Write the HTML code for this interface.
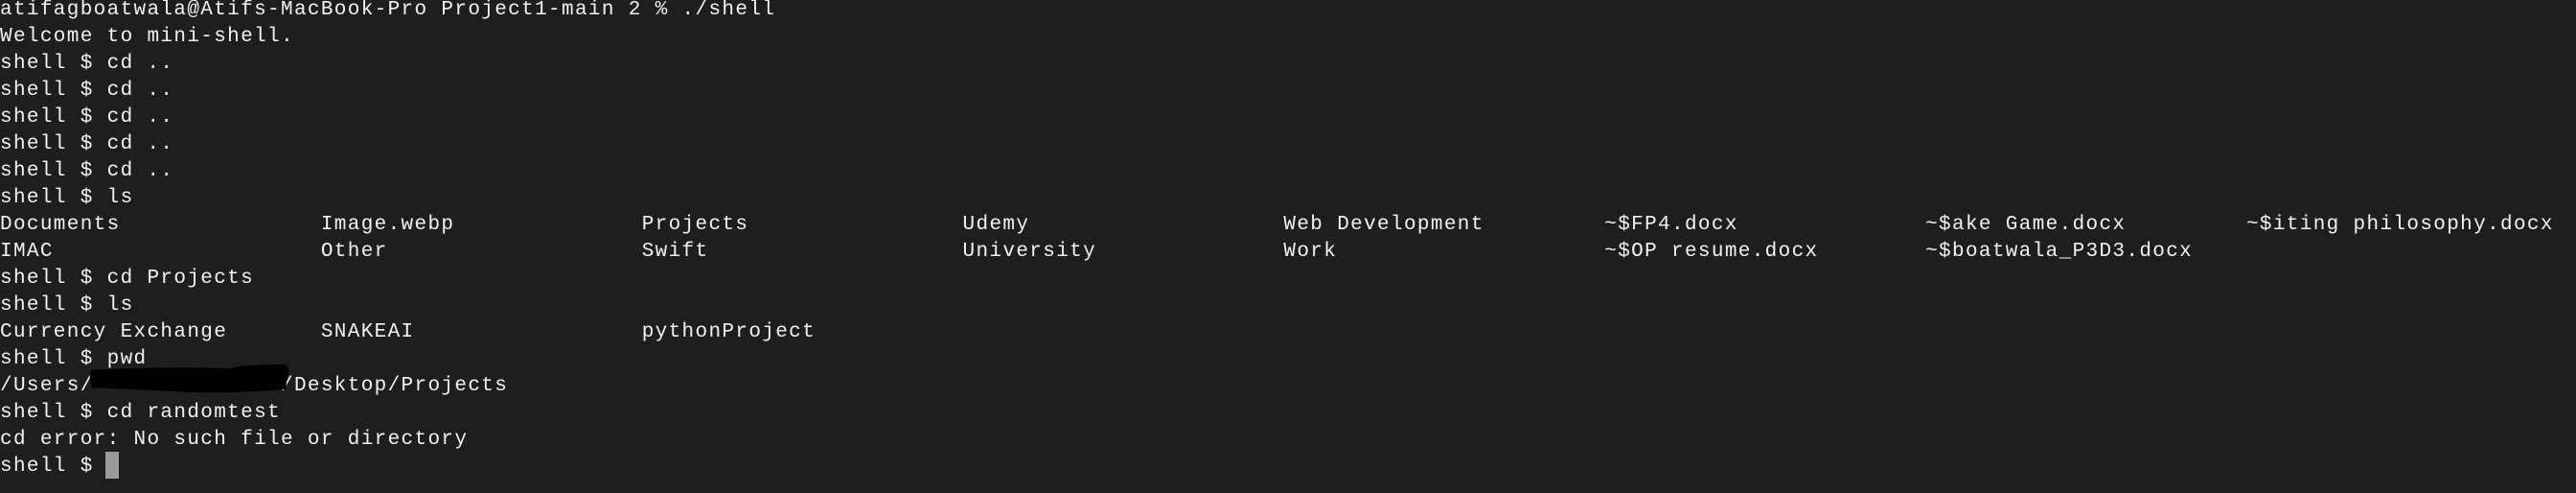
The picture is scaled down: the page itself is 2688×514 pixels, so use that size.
<!DOCTYPE html>
<html><head><meta charset="utf-8"><style>
html,body{margin:0;padding:0;background:#1e1e1e;width:2688px;height:514px;overflow:hidden;}
pre{margin:0;position:absolute;left:0;top:-3px;font-family:"Liberation Mono",monospace;font-size:21px;letter-spacing:1.35px;line-height:28px;color:#f2f2f2;white-space:pre;}
.cur{position:absolute;left:110px;top:471px;width:14px;height:28px;background:#9a9a9a;}
svg{position:absolute;left:0;top:0;}
</style></head><body>
<pre>atifagboatwala@Atifs-MacBook-Pro Project1-main 2 % ./shell
Welcome to mini-shell.
shell $ cd ..
shell $ cd ..
shell $ cd ..
shell $ cd ..
shell $ cd ..
shell $ ls
Documents               Image.webp              Projects                Udemy                   Web Development         ~$FP4.docx              ~$ake Game.docx         ~$iting philosophy.docx
IMAC                    Other                   Swift                   University              Work                    ~$OP resume.docx        ~$boatwala_P3D3.docx
shell $ cd Projects
shell $ ls
Currency Exchange       SNAKEAI                 pythonProject
shell $ pwd
/Users/              /Desktop/Projects
shell $ cd randomtest
cd error: No such file or directory
shell $ </pre>
<svg width="2688" height="514"><path d="M95 386 Q150 382 240 384 Q255 380 296 380 Q304 382 300 392 L298 406 Q250 410 200 409 Q140 406 96 404 Q92 395 95 386 Z" fill="#000"/></svg>
<div class="cur"></div>
</body></html>
